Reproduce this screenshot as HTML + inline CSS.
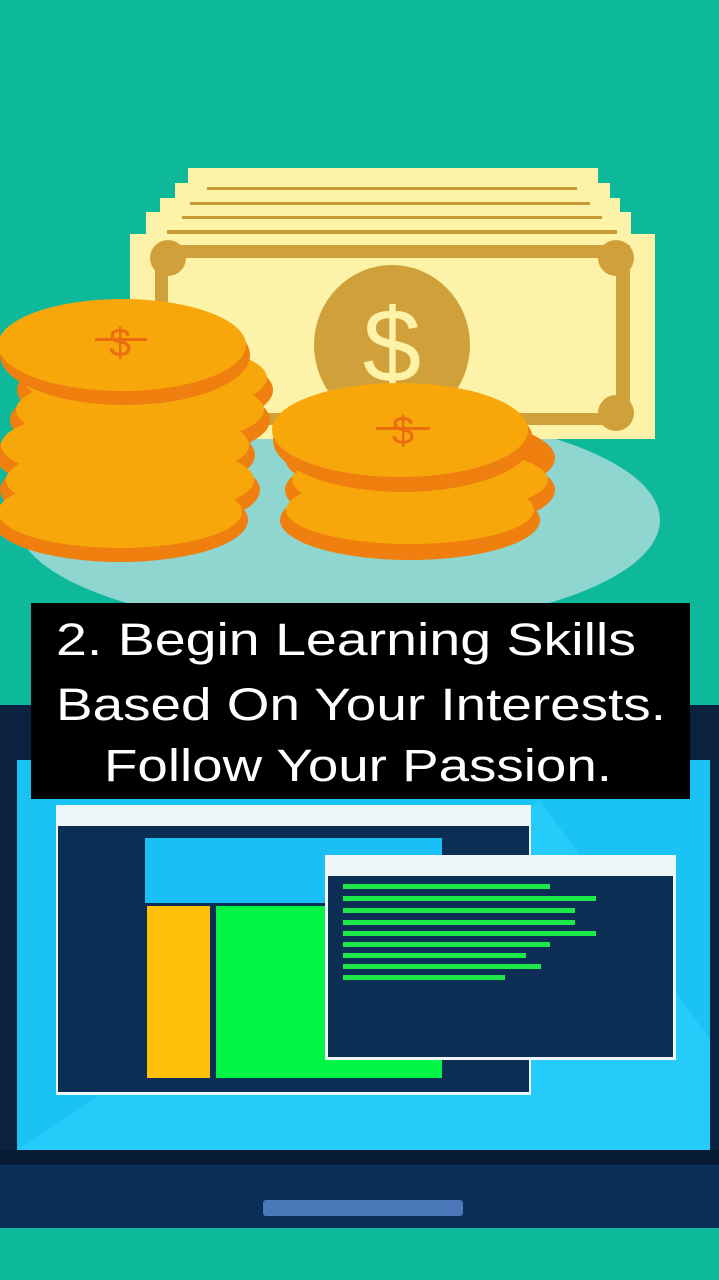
<!DOCTYPE html>
<html><head><meta charset="utf-8"><style>
html,body{margin:0;padding:0;background:#0db89b;}
svg{display:block}
</style></head><body>
<svg width="719" height="1280" viewBox="0 0 719 1280" xmlns="http://www.w3.org/2000/svg">
<rect width="719" height="1280" fill="#0db89b"/>
<ellipse cx="338" cy="520" rx="322" ry="110" fill="#8fd5d0"/>
<rect x="188" y="168" width="410" height="20" fill="#fdf3a8"/>
<rect x="175" y="183" width="435" height="20" fill="#fdf3a8"/>
<rect x="160" y="198" width="460" height="20" fill="#fdf3a8"/>
<rect x="146" y="212" width="485" height="22" fill="#fdf3a8"/>
<rect x="207" y="187" width="370" height="3" fill="#c99a35"/>
<rect x="190" y="202" width="400" height="3" fill="#c99a35"/>
<rect x="182" y="216" width="420" height="3" fill="#c99a35"/>
<rect x="167" y="230" width="450" height="4" fill="#c99a35"/>
<rect x="130" y="234" width="525" height="205" fill="#fdf3a8"/>
<rect x="155" y="245" width="475" height="180" fill="#d0a13a"/>
<rect x="168" y="258" width="448" height="155" fill="#fdf3a8"/>
<circle cx="168" cy="258" r="18" fill="#d0a13a"/>
<circle cx="616" cy="258" r="18" fill="#d0a13a"/>
<circle cx="168" cy="413" r="18" fill="#d0a13a"/>
<circle cx="616" cy="413" r="18" fill="#d0a13a"/>
<ellipse cx="392" cy="345" rx="78" ry="80" fill="#d0a13a"/>
<text x="392" y="382" font-family="Liberation Sans, sans-serif" font-size="105" fill="#fdf3a8" text-anchor="middle">$</text>
<g fill="#ef7f0f">
<ellipse cx="120" cy="520" rx="128" ry="42"/>
<ellipse cx="130" cy="490" rx="130" ry="42"/>
<ellipse cx="125" cy="455" rx="130" ry="42"/>
<ellipse cx="140" cy="420" rx="130" ry="42"/>
<ellipse cx="145" cy="390" rx="128" ry="42"/>
</g>
<g fill="#f8a70b">
<ellipse cx="120" cy="512" rx="122" ry="36"/>
<ellipse cx="130" cy="480" rx="124" ry="36"/>
<ellipse cx="125" cy="445" rx="124" ry="36"/>
<ellipse cx="140" cy="410" rx="124" ry="36"/>
<ellipse cx="145" cy="378" rx="122" ry="36"/>
</g>
<ellipse cx="125" cy="355" rx="125" ry="50" fill="#ef7f0f"/>
<ellipse cx="122" cy="345" rx="124" ry="46" fill="#f8a70b"/>
<text x="120" y="356" font-family="Liberation Sans, sans-serif" font-size="40" fill="#ec6d10" text-anchor="middle">$</text>
<rect x="95" y="338" width="52" height="3" fill="#ec6d10"/>
<g fill="#ef7f0f">
<ellipse cx="410" cy="520" rx="130" ry="40"/>
<ellipse cx="420" cy="490" rx="135" ry="42"/>
<ellipse cx="420" cy="458" rx="135" ry="42"/>
</g>
<g fill="#f8a70b">
<ellipse cx="410" cy="510" rx="124" ry="34"/>
<ellipse cx="420" cy="480" rx="128" ry="34"/>
</g>
<ellipse cx="403" cy="440" rx="130" ry="52" fill="#ef7f0f"/>
<ellipse cx="400" cy="430" rx="128" ry="47" fill="#f8a70b"/>
<text x="403" y="444" font-family="Liberation Sans, sans-serif" font-size="40" fill="#ec6d10" text-anchor="middle">$</text>
<rect x="376" y="427" width="54" height="3" fill="#ec6d10"/>
<rect x="0" y="705" width="719" height="460" fill="#0a2240"/>
<rect x="0" y="1150" width="719" height="20" fill="#071a33"/>
<rect x="0" y="1165" width="719" height="63" fill="#0b3058"/>
<rect x="263" y="1200" width="200" height="16" rx="3" fill="#4a78b8"/>
<rect x="17" y="760" width="693" height="390" fill="#1bc3f5"/>
<polygon points="17,1150 710,1150 710,1040 540,800 17,1150" fill="#2bd0fb" opacity="0.7"/>
<rect x="56" y="805" width="475" height="290" fill="#eef6fa"/>
<rect x="58" y="826" width="471" height="266" fill="#0c2e55"/>
<rect x="145" y="838" width="297" height="65" fill="#1ac0f5"/>
<rect x="147" y="906" width="63" height="172" fill="#ffc107"/>
<rect x="216" y="906" width="226" height="172" fill="#00f545"/>
<rect x="325" y="855" width="351" height="205" fill="#eef6fa"/>
<rect x="328" y="876" width="345" height="181" fill="#0c2e55"/>
<g fill="#1de84a">
<rect x="343" y="884" width="207" height="5"/>
<rect x="343" y="896" width="253" height="5"/>
<rect x="343" y="908" width="232" height="5"/>
<rect x="343" y="920" width="232" height="5"/>
<rect x="343" y="931" width="253" height="5"/>
<rect x="343" y="942" width="207" height="5"/>
<rect x="343" y="953" width="183" height="5"/>
<rect x="343" y="964" width="198" height="5"/>
<rect x="343" y="975" width="162" height="5"/>
</g>
<rect x="31" y="603" width="659" height="196" fill="#000"/>
<g font-family="Liberation Sans, DejaVu Sans, sans-serif" font-size="45" fill="#fff">
<text x="56" y="655" textLength="580" lengthAdjust="spacingAndGlyphs">2. Begin Learning Skills</text>
<text x="56" y="720" textLength="610" lengthAdjust="spacingAndGlyphs">Based On Your Interests.</text>
<text x="104" y="781" textLength="508" lengthAdjust="spacingAndGlyphs">Follow Your Passion.</text>
</g>
</svg>
</body></html>
